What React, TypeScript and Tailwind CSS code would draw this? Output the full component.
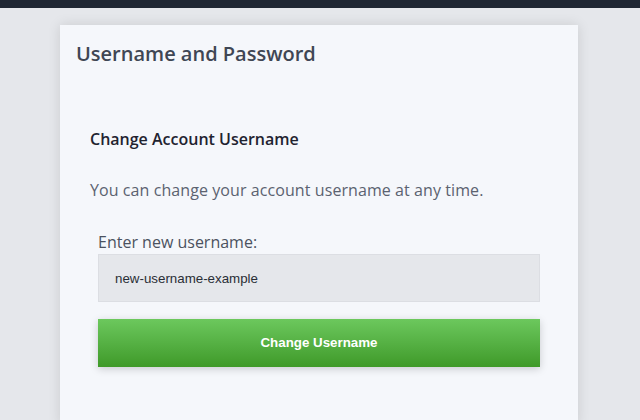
export default function App() {
  return (
    <div className="min-h-[420px] bg-[#e5e7eb] font-['Open_Sans',sans-serif]">
      {/* top bar */}
      <div className="h-2 bg-[#1f2733]" />

      <div className="pl-[60px] pt-[17px]">
        <div className="w-[518px] min-h-[400px] bg-[#f5f7fb] shadow-[0_0_12px_rgba(0,0,0,0.12)]">
          <h1 className="px-4 pt-[15px] text-[20px] font-semibold leading-[28px] text-[#3f4654]">
            Username and Password
          </h1>

          <div className="px-[30px] pt-[59px]">
            <h2 className="text-[16px] font-semibold leading-[24px] text-[#1f2330]">
              Change Account Username
            </h2>
            <p className="mt-[27px] text-[16px] leading-[24px] tracking-[0.08px] text-[#5b6270]">
              You can change your account username at any time.
            </p>

            <div className="mt-[29px] px-2">
              <label className="block text-[16px] leading-[22px] text-[#4b5260]">
                Enter new username:
              </label>
              <input
                type="text"
                defaultValue="new-username-example"
                className="mt-[1px] block h-[48px] w-[442px] border border-[#dcdee3] bg-[#e5e7eb] px-4 font-['Liberation_Sans',Arial,sans-serif] text-[13.333px] text-[#2a2e36] outline-none"
              />
              <button className="mt-[17px] block h-[48px] w-[442px] bg-gradient-to-b from-[#6cc85d] to-[#3f9a28] font-['Liberation_Sans',Arial,sans-serif] text-[13.333px] font-bold text-white shadow-[0_2px_8px_rgba(0,0,0,0.18)]">
                Change Username
              </button>
            </div>
          </div>
        </div>
      </div>
    </div>
  );
}
